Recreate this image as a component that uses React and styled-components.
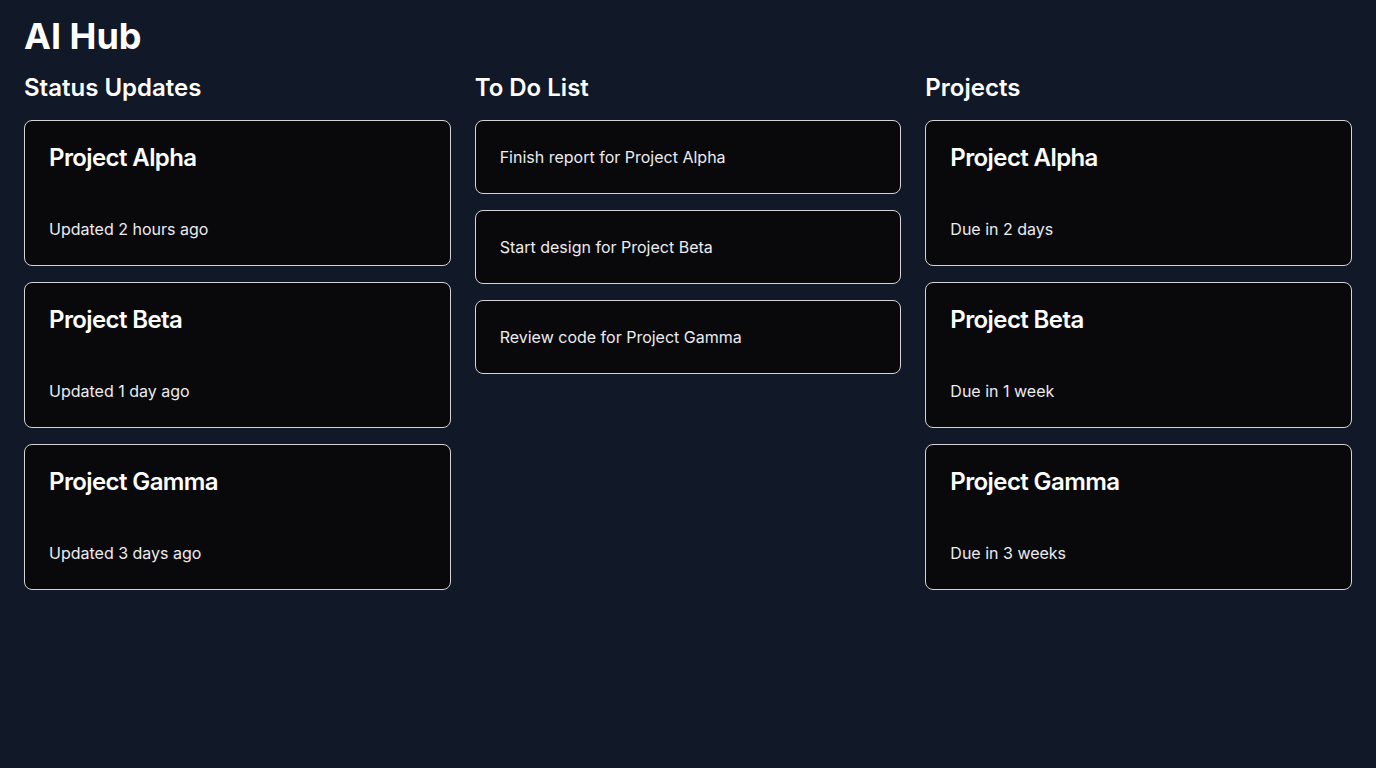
import React from 'react';
import styled, { createGlobalStyle } from 'styled-components';

const GlobalStyle = createGlobalStyle`
  * { box-sizing: border-box; }
  html, body {
    margin: 0;
    padding: 0;
    background-color: #111827;
    font-family: Inter, 'Noto Sans', sans-serif;
    color: #fafafa;
  }
`;

const Page = styled.main`
  min-height: 100vh;
  padding: 16px 24px 24px 24px;
`;

const Title = styled.h1`
  margin: 0 0 16px 0;
  font-size: 36px;
  line-height: 40px;
  font-weight: 700;
  color: #ffffff;
`;

const Columns = styled.div`
  display: grid;
  grid-template-columns: repeat(3, 1fr);
  gap: 24px;
`;

const Column = styled.section`
  display: flex;
  flex-direction: column;
`;

const ColumnTitle = styled.h2`
  margin: 0 0 16px 0;
  font-size: 24px;
  line-height: 32px;
  font-weight: 600;
  color: #ffffff;
`;

const CardList = styled.div`
  display: flex;
  flex-direction: column;
  gap: 16px;
`;

const Card = styled.div`
  background-color: #09090b;
  border: 1px solid #d4d4d8;
  border-radius: 8px;
  padding: 24px;
  display: flex;
  flex-direction: column;
`;

const CardTitle = styled.h3`
  margin: 1px 0 47px 0;
  font-size: 24px;
  line-height: 24px;
  font-weight: 600;
  letter-spacing: -0.6px;
  color: #ffffff;
`;

const CardText = styled.p`
  margin: 0;
  font-size: 16px;
  line-height: 24px;
  color: #ececef;
`;

const statusUpdates = [
  { name: 'Project Alpha', note: 'Updated 2 hours ago' },
  { name: 'Project Beta', note: 'Updated 1 day ago' },
  { name: 'Project Gamma', note: 'Updated 3 days ago' },
];

const todos = [
  'Finish report for Project Alpha',
  'Start design for Project Beta',
  'Review code for Project Gamma',
];

const projects = [
  { name: 'Project Alpha', note: 'Due in 2 days' },
  { name: 'Project Beta', note: 'Due in 1 week' },
  { name: 'Project Gamma', note: 'Due in 3 weeks' },
];

const ProjectCards = ({ items }) => (
  <CardList>
    {items.map(item => (
      <Card key={item.name}>
        <CardTitle>{item.name}</CardTitle>
        <CardText>{item.note}</CardText>
      </Card>
    ))}
  </CardList>
);

const App = () => (
  <>
    <GlobalStyle />
    <Page>
      <Title>AI Hub</Title>
      <Columns>
        <Column>
          <ColumnTitle>Status Updates</ColumnTitle>
          <ProjectCards items={statusUpdates} />
        </Column>
        <Column>
          <ColumnTitle>To Do List</ColumnTitle>
          <CardList>
            {todos.map(todo => (
              <Card key={todo}>
                <CardText>{todo}</CardText>
              </Card>
            ))}
          </CardList>
        </Column>
        <Column>
          <ColumnTitle>Projects</ColumnTitle>
          <ProjectCards items={projects} />
        </Column>
      </Columns>
    </Page>
  </>
);

export default App;
